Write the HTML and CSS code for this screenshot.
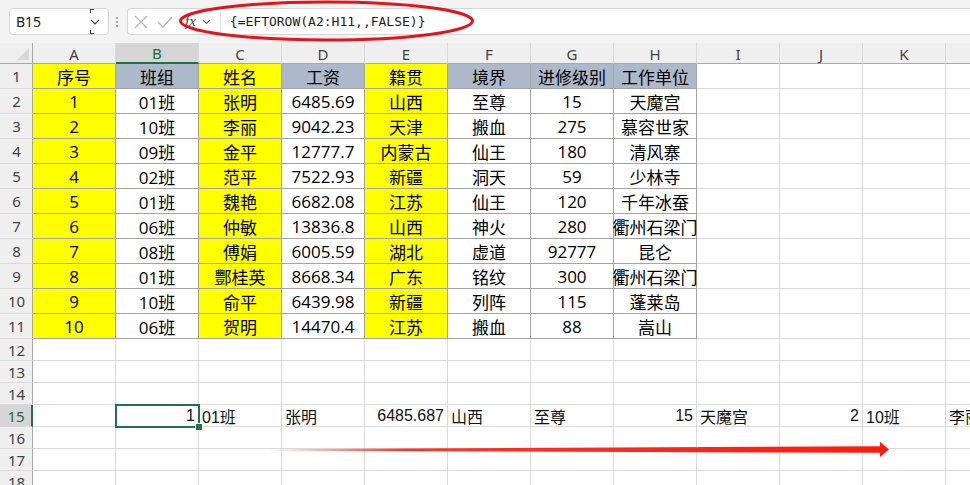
FILE: index.html
```html
<!DOCTYPE html>
<html lang="zh-CN">
<head>
<meta charset="utf-8">
<title>EFTOROW</title>
<link rel="stylesheet" href="styles.css">
</head>
<body>
<div class="app">
  <div class="topbar">
    <div class="namebox">
      <span class="name">B15</span>
      <span class="nb-mark nb-top"></span>
      <span class="nb-mark nb-bot"></span>
      <svg class="chev" width="10" height="6" viewBox="0 0 10 6"><path d="M1 1 L5 5 L9 1" fill="none" stroke="#444" stroke-width="1.2"/></svg>
    </div>
    <svg class="dots" width="4" height="12" viewBox="0 0 4 12"><circle cx="2" cy="2" r="1" fill="#888"/><circle cx="2" cy="6" r="1" fill="#888"/><circle cx="2" cy="10" r="1" fill="#888"/></svg>
    <div class="fbox">
      <div class="ficons">
        <svg width="14" height="14" viewBox="0 0 14 14"><path d="M1 1 L13 13 M13 1 L1 13" stroke="#b5b5b5" stroke-width="1.3" fill="none"/></svg>
        <svg width="16" height="12" viewBox="0 0 16 12"><path d="M1 6 L6 11 L15 1" stroke="#b5b5b5" stroke-width="1.3" fill="none"/></svg>
        <span class="fx">fx</span>
        <svg width="9" height="6" viewBox="0 0 9 6"><path d="M1 1 L4.5 4.5 L8 1" fill="none" stroke="#666" stroke-width="1.1"/></svg>
      </div>
      <div class="ftext">{=EFTOROW(A2:H11,,FALSE)}</div>
    </div>
  </div>

  <div class="sheet">
    <div class="corner"><span class="tri"></span></div>
    <div class="h">A</div><div class="h sel">B</div><div class="h">C</div><div class="h">D</div><div class="h">E</div><div class="h">F</div><div class="h">G</div><div class="h">H</div><div class="h">I</div><div class="h">J</div><div class="h">K</div><div class="h">L</div>

    <div class="rh">1</div>
    <div class="t y">序号</div><div class="t g">班组</div><div class="t y">姓名</div><div class="t g">工资</div><div class="t y">籍贯</div><div class="t g">境界</div><div class="t g">进修级别</div><div class="t g">工作单位</div><div class="c"></div><div class="c"></div><div class="c"></div><div class="c"></div>

    <div class="rh">2</div>
    <div class="t y">1</div><div class="t">01班</div><div class="t y">张明</div><div class="t">6485.69</div><div class="t y">山西</div><div class="t">至尊</div><div class="t">15</div><div class="t">天魔宫</div><div class="c"></div><div class="c"></div><div class="c"></div><div class="c"></div>

    <div class="rh">3</div>
    <div class="t y">2</div><div class="t">10班</div><div class="t y">李丽</div><div class="t">9042.23</div><div class="t y">天津</div><div class="t">搬血</div><div class="t">275</div><div class="t">慕容世家</div><div class="c"></div><div class="c"></div><div class="c"></div><div class="c"></div>

    <div class="rh">4</div>
    <div class="t y">3</div><div class="t">09班</div><div class="t y">金平</div><div class="t">12777.7</div><div class="t y">内蒙古</div><div class="t">仙王</div><div class="t">180</div><div class="t">清风寨</div><div class="c"></div><div class="c"></div><div class="c"></div><div class="c"></div>

    <div class="rh">5</div>
    <div class="t y">4</div><div class="t">02班</div><div class="t y">范平</div><div class="t">7522.93</div><div class="t y">新疆</div><div class="t">洞天</div><div class="t">59</div><div class="t">少林寺</div><div class="c"></div><div class="c"></div><div class="c"></div><div class="c"></div>

    <div class="rh">6</div>
    <div class="t y">5</div><div class="t">01班</div><div class="t y">魏艳</div><div class="t">6682.08</div><div class="t y">江苏</div><div class="t">仙王</div><div class="t">120</div><div class="t">千年冰蚕</div><div class="c"></div><div class="c"></div><div class="c"></div><div class="c"></div>

    <div class="rh">7</div>
    <div class="t y">6</div><div class="t">06班</div><div class="t y">仲敏</div><div class="t">13836.8</div><div class="t y">山西</div><div class="t">神火</div><div class="t">280</div><div class="t">衢州石梁门</div><div class="c"></div><div class="c"></div><div class="c"></div><div class="c"></div>

    <div class="rh">8</div>
    <div class="t y">7</div><div class="t">08班</div><div class="t y">傅娟</div><div class="t">6005.59</div><div class="t y">湖北</div><div class="t">虚道</div><div class="t">92777</div><div class="t">昆仑</div><div class="c"></div><div class="c"></div><div class="c"></div><div class="c"></div>

    <div class="rh">9</div>
    <div class="t y">8</div><div class="t">01班</div><div class="t y">酆桂英</div><div class="t">8668.34</div><div class="t y">广东</div><div class="t">铭纹</div><div class="t">300</div><div class="t">衢州石梁门</div><div class="c"></div><div class="c"></div><div class="c"></div><div class="c"></div>

    <div class="rh">10</div>
    <div class="t y">9</div><div class="t">10班</div><div class="t y">俞平</div><div class="t">6439.98</div><div class="t y">新疆</div><div class="t">列阵</div><div class="t">115</div><div class="t">蓬莱岛</div><div class="c"></div><div class="c"></div><div class="c"></div><div class="c"></div>

    <div class="rh">11</div>
    <div class="t y">10</div><div class="t">06班</div><div class="t y">贺明</div><div class="t">14470.4</div><div class="t y">江苏</div><div class="t">搬血</div><div class="t">88</div><div class="t">嵩山</div><div class="c"></div><div class="c"></div><div class="c"></div><div class="c"></div>

    <div class="rh">12</div>
    <div class="c"></div><div class="c"></div><div class="c"></div><div class="c"></div><div class="c"></div><div class="c"></div><div class="c"></div><div class="c"></div><div class="c"></div><div class="c"></div><div class="c"></div><div class="c"></div>

    <div class="rh">13</div>
    <div class="c"></div><div class="c"></div><div class="c"></div><div class="c"></div><div class="c"></div><div class="c"></div><div class="c"></div><div class="c"></div><div class="c"></div><div class="c"></div><div class="c"></div><div class="c"></div>

    <div class="rh">14</div>
    <div class="c"></div><div class="c"></div><div class="c"></div><div class="c"></div><div class="c"></div><div class="c"></div><div class="c"></div><div class="c"></div><div class="c"></div><div class="c"></div><div class="c"></div><div class="c"></div>

    <div class="rh rsel">15</div>
    <div class="c"></div><div class="c r active">1</div><div class="c">01班</div><div class="c">张明</div><div class="c r">6485.687</div><div class="c">山西</div><div class="c">至尊</div><div class="c r">15</div><div class="c">天魔宫</div><div class="c r">2</div><div class="c">10班</div><div class="c">李丽</div>

    <div class="rh">16</div>
    <div class="c"></div><div class="c"></div><div class="c"></div><div class="c"></div><div class="c"></div><div class="c"></div><div class="c"></div><div class="c"></div><div class="c"></div><div class="c"></div><div class="c"></div><div class="c"></div>

    <div class="rh">17</div>
    <div class="c"></div><div class="c"></div><div class="c"></div><div class="c"></div><div class="c"></div><div class="c"></div><div class="c"></div><div class="c"></div><div class="c"></div><div class="c"></div><div class="c"></div><div class="c"></div>

    <div class="rh">18</div>
    <div class="c"></div><div class="c"></div><div class="c"></div><div class="c"></div><div class="c"></div><div class="c"></div><div class="c"></div><div class="c"></div><div class="c"></div><div class="c"></div><div class="c"></div><div class="c"></div>
  </div>

  <svg class="marks" width="970" height="485" viewBox="0 0 970 485">
    <defs>
      <linearGradient id="fade" x1="265" y1="0" x2="889" y2="0" gradientUnits="userSpaceOnUse">
        <stop offset="0" stop-color="#ff2a1a" stop-opacity="0"/>
        <stop offset="0.22" stop-color="#ff2a1a" stop-opacity="0.95"/>
        <stop offset="1" stop-color="#ff1a0f" stop-opacity="1"/>
      </linearGradient>
    </defs>
    <ellipse cx="326.5" cy="21" rx="146" ry="19" fill="none" stroke="#e5141b" stroke-width="3"/>
    <path d="M265 449.2 L880 446.2 L880 441.8 L889 449.4 L880 457 L880 452.8 L265 450.8 Z" fill="url(#fade)"/>
  </svg>
</div>
</body>
</html>
```
FILE: styles.css
```css
html, body {
  margin: 0;
  padding: 0;
}
body {
  width: 970px;
  height: 485px;
  overflow: hidden;
  background: #ffffff;
  font-family: "Noto Sans", "Noto Sans CJK SC", sans-serif;
}
.app {
  position: relative;
  width: 970px;
  height: 485px;
  overflow: hidden;
}

/* ---------- formula bar ---------- */
.topbar {
  height: 43px;
  box-sizing: border-box;
  background: #f3f3f3;
  display: flex;
  align-items: flex-start;
  padding: 8px 0 0 9px;
}
.namebox {
  position: relative;
  width: 100px;
  height: 27px;
  box-sizing: border-box;
  background: #fff;
  border: 1px solid #d6d6d6;
  border-radius: 4px;
  display: flex;
  align-items: center;
  padding: 0 6px 0 6px;
}
.name {
  flex: 1;
  font-family: "Noto Sans", sans-serif;
  font-size: 14px;
  color: #222;
}
.nb-mark {
  position: absolute;
  left: 80px;
  width: 3px;
  height: 3px;
  border-left: 1px solid #444;
}
.nb-top { top: 0; border-top: 1px solid #444; }
.nb-bot { bottom: 0; border-bottom: 1px solid #444; }
.chev { margin-right: 2px; }
.dots {
  margin: 8px 8px 0 6px;
}
.fbox {
  flex: 1;
  height: 27px;
  box-sizing: border-box;
  background: #fff;
  border: 1px solid #d6d6d6;
  border-right: none;
  border-radius: 4px 0 0 4px;
  display: flex;
  align-items: center;
}
.ficons {
  height: 100%;
  display: flex;
  align-items: center;
  gap: 9px;
  padding: 0 9px 0 6px;
  border-right: 1px solid #e0e0e0;
}
.fx {
  font-family: "Liberation Serif", serif;
  font-style: italic;
  font-size: 15px;
  color: #444;
  margin-left: 3px;
  margin-right: -3px;
}
.ftext {
  padding-left: 9px;
  font-family: "DejaVu Sans Mono", monospace;
  font-size: 13px;
  color: #1e1e1e;
  white-space: nowrap;
}

/* ---------- grid ---------- */
.sheet {
  display: grid;
  grid-template-columns: 33px repeat(12, 83px);
  grid-template-rows: 21px repeat(11, 25px) repeat(7, 22px);
}
.sheet > div {
  box-sizing: border-box;
  display: flex;
  align-items: center;
  white-space: nowrap;
  min-width: 0;
}
.corner {
  position: relative;
  background: #efefef;
  border-right: 1px solid #a8a8a8;
  border-bottom: 1px solid #a8a8a8;
}
.tri {
  position: absolute;
  right: 3px;
  bottom: 3px;
  width: 0;
  height: 0;
  border-left: 12px solid transparent;
  border-bottom: 12px solid #dadada;
}
.h {
  background: #efefef;
  justify-content: center;
  font-family: "Noto Sans", sans-serif;
  font-size: 15px;
  color: #444;
  border-right: 1px solid #dadada;
  border-bottom: 1px solid #a8a8a8;
  padding-top: 1px;
}
.h.sel {
  background: #d6d6d6;
  color: #1e6b41;
  border-bottom: 2px solid #217346;
}
.rh {
  background: #efefef;
  justify-content: center;
  font-family: "Noto Sans", sans-serif;
  font-size: 15px;
  color: #444;
  border-right: 1px solid #a8a8a8;
  border-bottom: 1px solid #dadada;
  padding-left: 1px;
}
.rh.rsel {
  background: #d6d6d6;
  color: #1e6b41;
  border-right: 2px solid #217346;
}
.c {
  border-right: 1px solid #dadada;
  border-bottom: 1px solid #dadada;
  padding: 1px 3px 0;
  font-family: "Liberation Sans", "Noto Sans CJK SC", sans-serif;
  font-size: 16px;
  color: #111;
}
.c.r {
  justify-content: flex-end;
}
.t {
  justify-content: center;
  border-right: 1px solid #a3a3a3;
  border-bottom: 1px solid #a3a3a3;
  font-family: "Open Sans", "Noto Sans CJK SC", sans-serif;
  font-size: 17px;
  color: #000;
  background: #fff;
  overflow: visible;
}
.t.y { background: #ffff00; }
.t.g { background: #acb9ca; }

.active {
  position: relative;
  outline: 2px solid #217346;
  outline-offset: -1px;
  z-index: 1;
}
.active::after {
  content: "";
  position: absolute;
  right: -5px;
  bottom: -5px;
  width: 6px;
  height: 6px;
  background: #217346;
  border: 1px solid #fff;
}

/* ---------- annotations ---------- */
.marks {
  position: absolute;
  left: 0;
  top: 0;
  pointer-events: none;
}
```
